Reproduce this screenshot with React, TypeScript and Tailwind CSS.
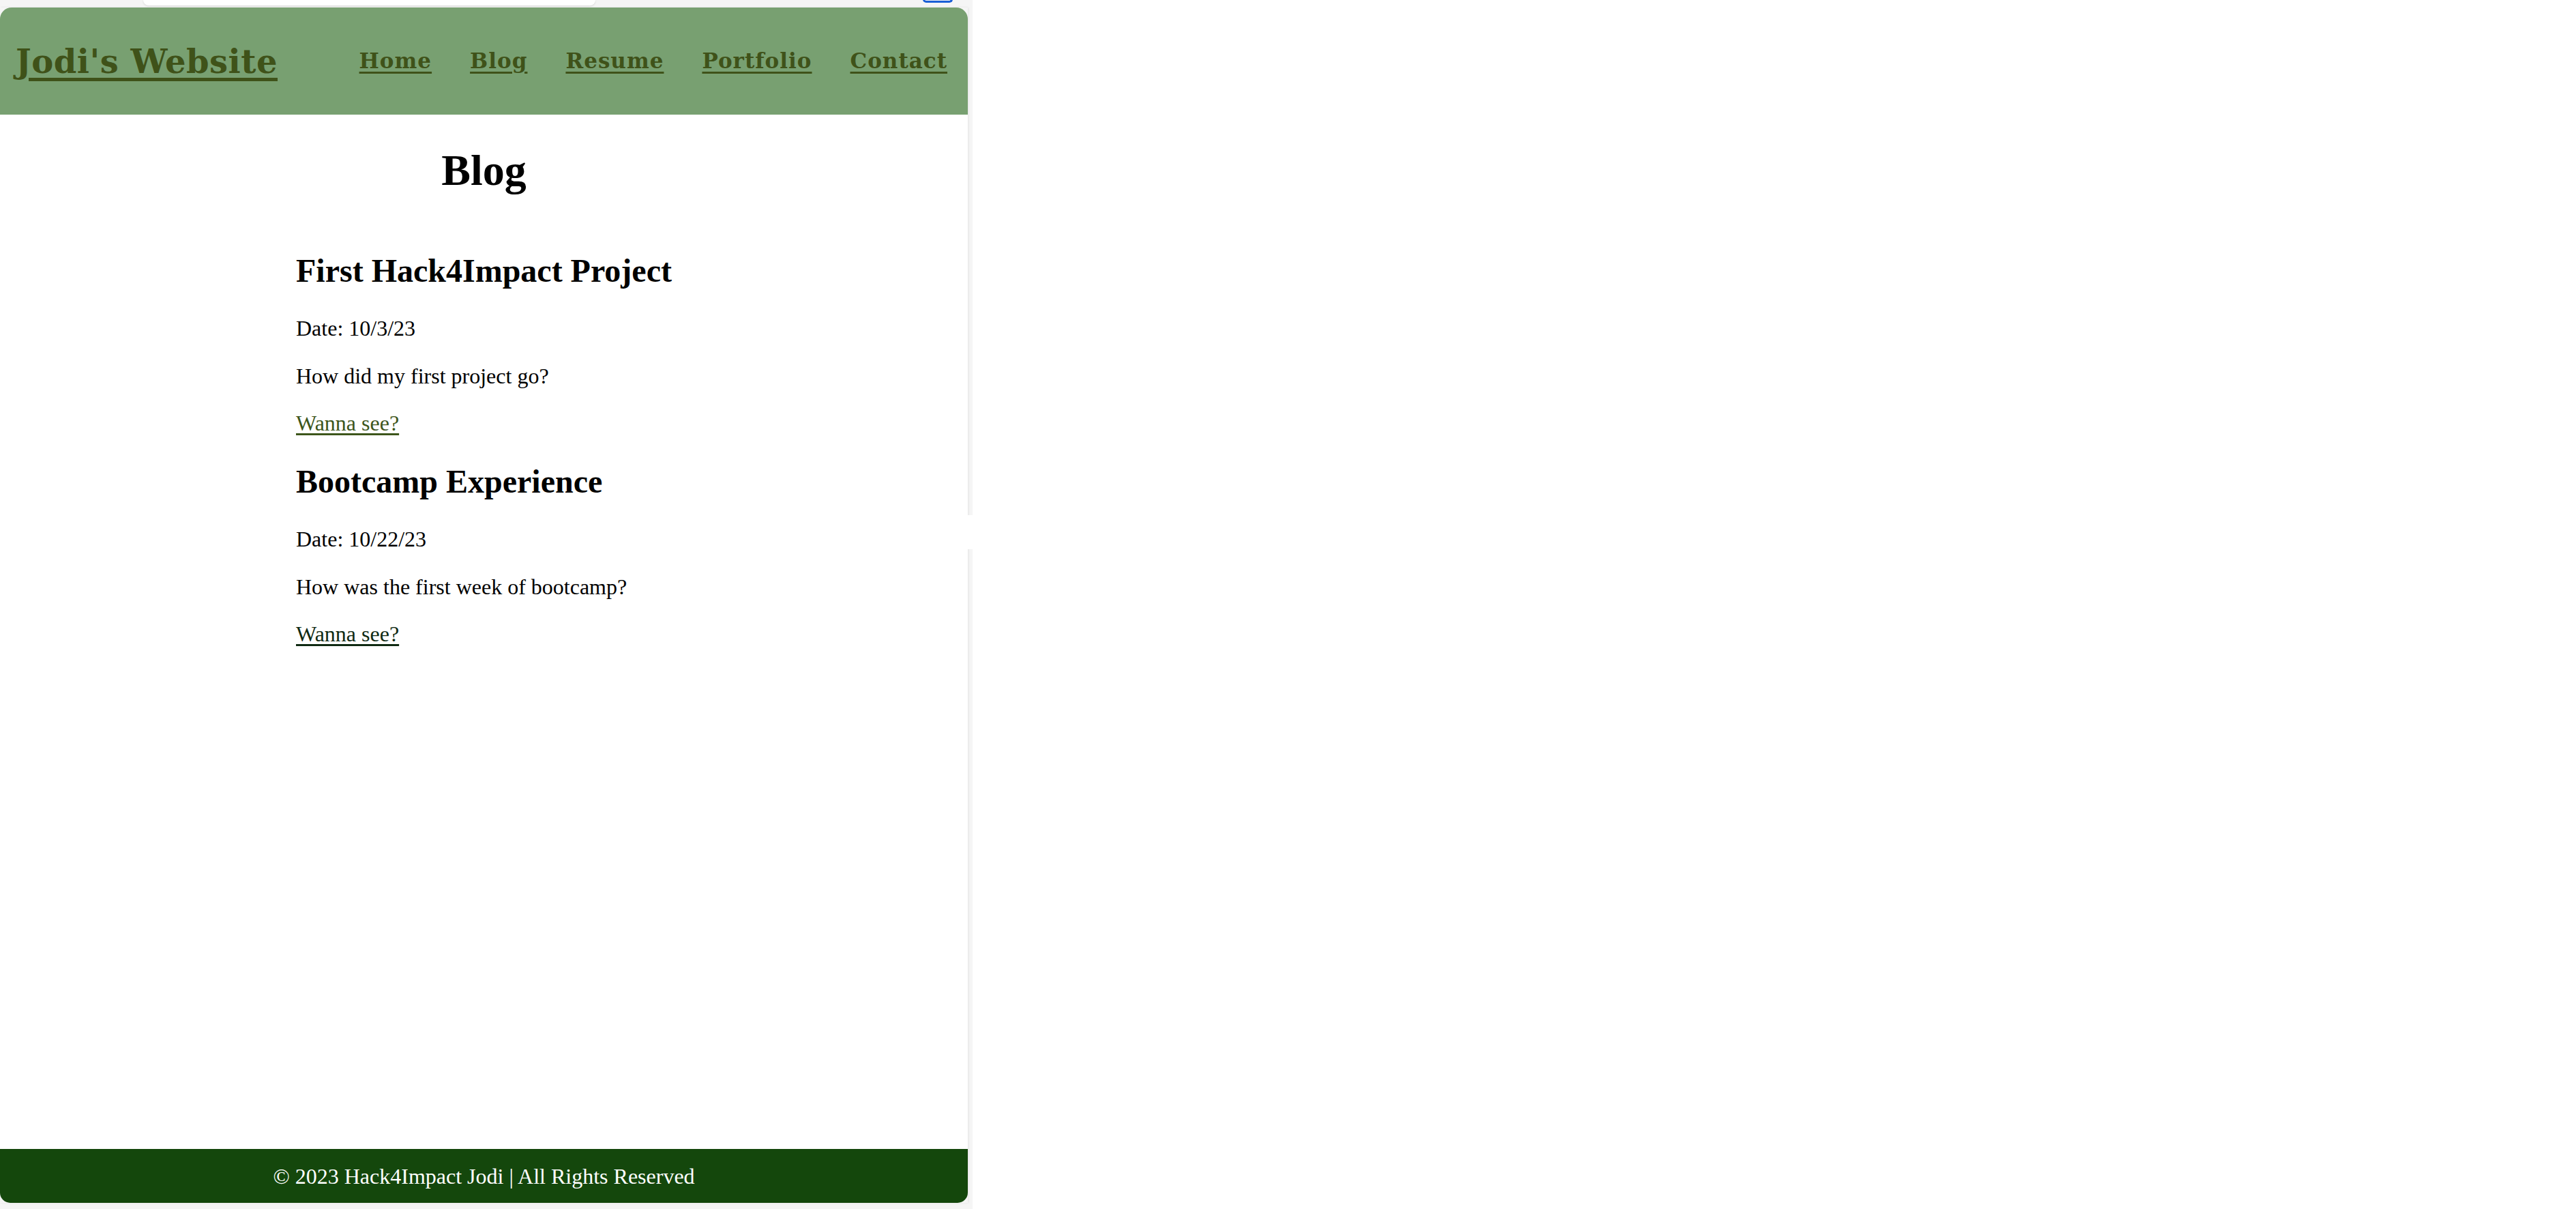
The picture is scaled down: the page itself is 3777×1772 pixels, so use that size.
import React from "react";

interface iPost {
  title: string;
  date: string;
  summary: string;
  linkColor: string;
}

const posts: iPost[] = [
  {
    title: "First Hack4Impact Project",
    date: "10/3/23",
    summary: "How did my first project go?",
    linkColor: "text-[#3d561b] decoration-[#3d561b]",
  },
  {
    title: "Bootcamp Experience",
    date: "10/22/23",
    summary: "How was the first week of bootcamp?",
    linkColor: "text-[#0f2a12] decoration-[#0f2a12]",
  },
];

const navLinks = ["Home", "Blog", "Resume", "Portfolio", "Contact"];

const BlogPost: React.FC<{ post: iPost; first: boolean }> = ({ post, first }) => {
  return (
    <div className={first ? "" : "mt-[39px]"}>
      <h2 className="text-[48px] leading-[55px] font-bold text-black">{post.title}</h2>
      <p className="mt-[39px] text-[32px] leading-[37px]">Date: {post.date}</p>
      <p className="mt-[33px] text-[32px] leading-[37px]">{post.summary}</p>
      <p className="mt-[32px] text-[32px] leading-[37px]">
        <a href="#" className={`underline underline-offset-[4px] decoration-[3px] ${post.linkColor}`}>
          Wanna see?
        </a>
      </p>
    </div>
  );
};

export default function App() {
  return (
    <div className="flex w-[3777px] h-[1772px] bg-white overflow-hidden font-['Liberation_Serif',serif] text-black">
      <div className="w-[1426px] flex flex-col bg-[#f5f5f5]">
        {/* browser chrome sliver */}
        <div className="h-[11px] flex items-start">
          <div className="ml-[210px] w-[663px] h-[8px] bg-white rounded-b-[10px] shadow-[0_1px_3px_rgba(0,0,0,0.12)]" />
          <div className="ml-[480px] w-[44px] h-[5px] -mt-[1px] rounded-b-full border-x-[3px] border-b-[3px] border-[#1a5fd6]" />
        </div>

        <div className="flex flex-1">
          <div className="w-[1419px] flex flex-col shadow-[1px_0_3px_rgba(0,0,0,0.08)]">
            <header className="h-[157px] bg-[#78a071] rounded-t-[17px] flex items-center justify-between pl-[23px] pr-[30px] font-['DejaVu_Serif',serif] font-bold text-[#3f5219]">
              <a href="#" className="text-[48px] tracking-[0.5px] underline decoration-[5px] underline-offset-[7px]">
                Jodi's Website
              </a>
              <nav className="flex items-center gap-[56px]">
                {navLinks.map((item) => (
                  <a
                    key={item}
                    href="#"
                    className="text-[31px] tracking-[1px] underline decoration-[3px] underline-offset-[5px]"
                  >
                    {item}
                  </a>
                ))}
              </nav>
            </header>

            <main className="flex-1 bg-white">
              <h1 className="mt-[45px] text-center text-[64px] leading-[74px] font-bold">Blog</h1>
              <div className="pl-[434px] mt-[82px]">
                {posts.map((post, index) => (
                  <BlogPost key={post.title} post={post} first={index === 0} />
                ))}
              </div>
            </main>

            <footer className="h-[79px] bg-[#14470c] rounded-b-[15px] flex items-center justify-center text-white text-[32px]">
              © 2023 Hack4Impact Jodi | All Rights Reserved
            </footer>
          </div>
          <div className="w-[7px] flex flex-col">
            <div className="h-[744px]" />
            <div className="h-[50px] bg-white" />
            <div className="flex-1" />
          </div>
        </div>

        <div className="h-[9px]" />
      </div>
    </div>
  );
}
